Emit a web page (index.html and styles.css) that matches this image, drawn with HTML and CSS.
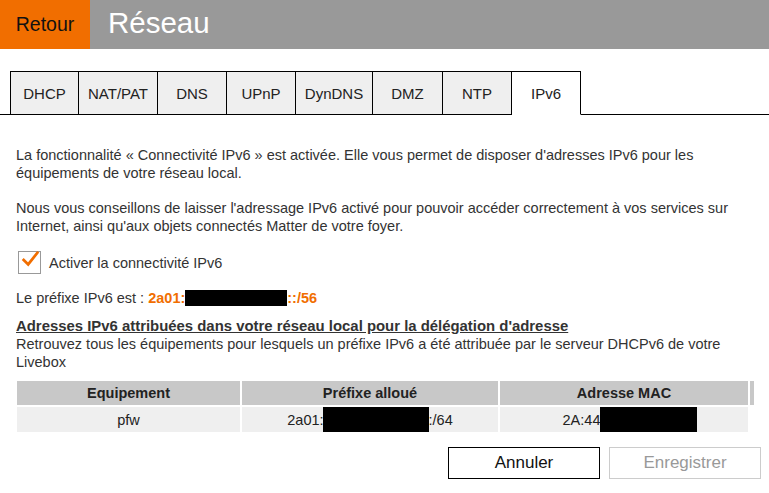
FILE: index.html
```html
<!DOCTYPE html>
<html lang="fr">
<head>
<meta charset="utf-8">
<title>Réseau</title>
<link rel="stylesheet" href="styles.css">
</head>
<body>
<header class="topbar">
  <div class="back">Retour</div>
  <h1 class="title">Réseau</h1>
</header>
<nav class="tabs">
  <div class="tab">DHCP</div>
  <div class="tab">NAT/PAT</div>
  <div class="tab">DNS</div>
  <div class="tab">UPnP</div>
  <div class="tab">DynDNS</div>
  <div class="tab">DMZ</div>
  <div class="tab">NTP</div>
  <div class="tab active">IPv6</div>
</nav>
<main class="content">
  <p class="para">La fonctionnalité « Connectivité IPv6 » est activée. Elle vous permet de disposer d'adresses IPv6 pour les équipements de votre réseau local.</p>
  <p class="para">Nous vous conseillons de laisser l'adressage IPv6 activé pour pouvoir accéder correctement à vos services sur Internet, ainsi qu'aux objets connectés Matter de votre foyer.</p>
  <label class="check">
    <span class="box"><svg width="22" height="20" viewBox="0 0 22 20"><path d="M3 10 L9 16 L20 2" fill="none" stroke="#f16e00" stroke-width="3"/></svg></span>
    <span>Activer la connectivité IPv6</span>
  </label>
  <p class="prefix">Le préfixe IPv6 est : <strong class="orange">2a01:<span class="redact r1"></span>::/56</strong></p>
  <h2 class="subtitle">Adresses IPv6 attribuées dans votre réseau local pour la délégation d'adresse</h2>
  <p class="desc">Retrouvez tous les équipements pour lesquels un préfixe IPv6 a été attribuée par le serveur DHCPv6 de votre Livebox</p>
  <table class="grid">
    <thead>
      <tr><th class="c1">Equipement</th><th class="c2">Préfixe alloué</th><th class="c3">Adresse MAC</th><th class="c4"></th></tr>
    </thead>
    <tbody>
      <tr><td>pfw</td><td><span class="cellwrap">2a01:<span class="redact r2"></span>:/64</span></td><td><span class="cellwrap">2A:44<span class="redact r3"></span></span></td><td class="empty"></td></tr>
    </tbody>
  </table>
  <div class="actions">
    <button class="btn">Annuler</button>
    <button class="btn disabled">Enregistrer</button>
  </div>
</main>
</body>
</html>
```
FILE: styles.css
```css
* { box-sizing: border-box; }
body {
  margin: 0;
  font-family: "Liberation Sans", Arial, sans-serif;
  color: #222;
  background: #fff;
}
.topbar {
  display: flex;
  height: 49px;
  background: #999;
}
.back {
  width: 90px;
  background: #f16e00;
  color: #111;
  font-size: 19.5px;
  display: flex;
  align-items: center;
  justify-content: center;
}
.title {
  margin: 0;
  padding-left: 18px;
  font-size: 29.5px;
  font-weight: normal;
  color: #fff;
  line-height: 46px;
}
.tabs {
  display: flex;
  margin-top: 22px;
  padding-left: 10px;
  border-bottom: 1px solid #000;
  height: 44px;
}
.tab {
  height: 44px;
  border: 1px solid #000;
  border-left: none;
  background: #efefef;
  font-size: 15px;
  display: flex;
  align-items: center;
  justify-content: center;
  color: #222;
}
.tab:first-child { border-left: 1px solid #000; width: 69px; }
.tab:nth-child(2) { width: 79px; }
.tab:nth-child(3) { width: 69px; }
.tab:nth-child(4) { width: 69px; }
.tab:nth-child(5) { width: 77px; }
.tab:nth-child(6) { width: 70px; }
.tab:nth-child(7) { width: 69px; }
.tab.active {
  width: 69px;
  background: #fff;
  border-bottom-color: #fff;
}
.content {
  padding: 31px 16px 0 16px;
  font-size: 14.5px;
  color: #333;
}
.para {
  margin: 0 0 17px 0;
  line-height: 18px;
}
.check {
  display: flex;
  align-items: center;
  gap: 8px;
  margin-top: -1px;
  padding-left: 2px;
}
.box {
  width: 23px;
  height: 23px;
  border: 1px solid #999;
  display: flex;
  align-items: flex-start;
  justify-content: center;
}
.box svg { margin-top: -3px; margin-left: 1px; }
.prefix {
  margin: 15px 0 0 0;
  line-height: 18px;
}
.orange { color: #f16e00; }
.redact {
  display: inline-block;
  background: #000;
  vertical-align: middle;
}
.r1 { width: 102px; height: 16px; margin-top: -3px; }
.subtitle {
  margin: 11px 0 0 0;
  font-size: 14.9px;
  font-weight: bold;
  text-decoration: underline;
  line-height: 16px;
  color: #333;
}
.desc {
  margin: 1px 0 0 0;
  line-height: 18px;
}
.grid {
  width: 741px;
  margin: 8px 0 0 -1px;
  border-spacing: 2px;
  font-size: 14.5px;
  table-layout: fixed;
}
.grid th {
  background: #c8c8c8;
  height: 24px;
  font-weight: bold;
  color: #222;
  padding: 0;
}
.c1 { width: 223px; }
.c2 { width: 256px; }
.c3 { width: 248px; }
.c4 { width: 4px; }
.grid td {
  background: #efefef;
  height: 25px;
  text-align: center;
  padding: 0;
  color: #222;
}
.grid td.empty { background: transparent; }
.cellwrap { display: inline-flex; align-items: center; height: 25px; }
.r2 { width: 106px; height: 25px; margin-left: -1px; }
.r3 { width: 97px; height: 25px; margin-right: -12px; }
.actions {
  display: flex;
  justify-content: flex-end;
  gap: 9px;
  margin-top: 13px;
  padding-right: 8px;
  margin-right: -16px;
}
.btn {
  width: 152px;
  height: 32px;
  background: #fff;
  border: 1px solid #000;
  font-family: "Liberation Sans", Arial, sans-serif;
  font-size: 17px;
  color: #111;
  padding: 0;
}
.btn.disabled {
  border-color: #ccc;
  color: #999;
}
```
